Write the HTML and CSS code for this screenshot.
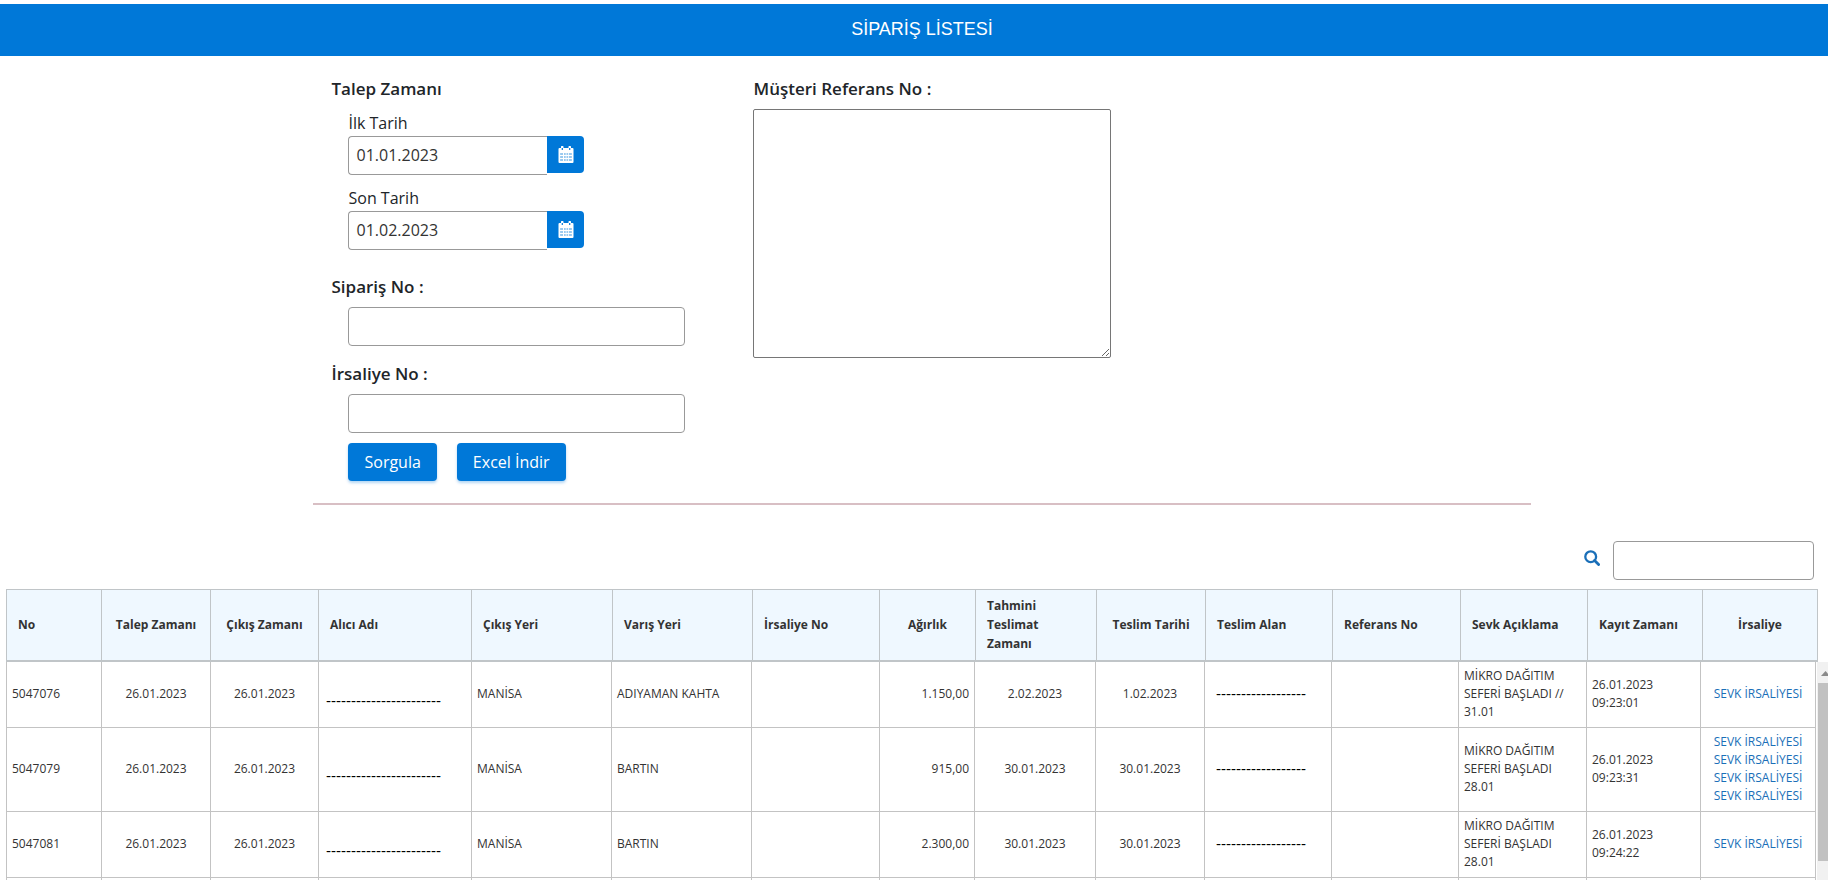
FILE: index.html
```html
<!DOCTYPE html>
<html lang="tr">
<head>
<meta charset="utf-8">
<title>Sipariş Listesi</title>
<link rel="stylesheet" href="styles.css">
</head>
<body>
<svg class="sprite" aria-hidden="true">
  <symbol id="calendar" viewBox="0 0 16 18">
    <path fill="currentColor" fill-rule="evenodd" d="M1.500 2H3V1a1 1 0 0 1 2.500 0V2h5V1A1 1 0 0 1 13 1V2h1.500A1 1 0 0 1 15.500 3V16a1 1 0 0 1-1 1h-13a1 1 0 0 1-1-1V3a1 1 0 0 1 1-1ZM2.500 7v2H5V7ZM6 7v2h1.700V7ZM8.500 7v2h1.700V7ZM11 7v2h2.500V7ZM2.500 10v2H5v-2ZM6 10v2h1.700v-2ZM8.500 10v2h1.700v-2ZM11 10v2h2.500v-2ZM2.500 13v2H5v-2ZM6 13v2h1.700v-2ZM8.500 13v2h1.700v-2ZM11 13v2h2.500v-2Z"/>
    <path fill="#fff" fill-opacity=".6" d="M2.500 7h11v8h-11z"/>
    <path fill="#0078d8" d="M3.700 2h1.200v2H3.700zM11.100 2h1.200v2h-1.200z"/>
  </symbol>
</svg>
<div class="page">
  <header class="titlebar"><h1 class="title">SİPARİŞ LİSTESİ</h1></header>

  <main>
    <form class="filters">
      <div class="filter-column">
        <fieldset class="group">
          <legend class="heading">Talep Zamanı</legend>
          <div class="date-field">
            <label class="label" for="first">İlk Tarih</label>
            <div class="date">
              <input class="input date-input" id="first" type="text" value="01.01.2023">
              <button class="date-button" type="button" aria-label="Takvim"><svg class="calendar"><use href="#calendar"/></svg></button>
            </div>
          </div>
          <div class="date-field">
            <label class="label" for="last">Son Tarih</label>
            <div class="date">
              <input class="input date-input" id="last" type="text" value="01.02.2023">
              <button class="date-button" type="button" aria-label="Takvim"><svg class="calendar"><use href="#calendar"/></svg></button>
            </div>
          </div>
        </fieldset>
        <div class="group text-field">
          <label class="heading" for="order">Sipariş No :</label>
          <input class="input indent" id="order" type="text">
        </div>
        <div class="group text-field">
          <label class="heading" for="waybill">İrsaliye No :</label>
          <input class="input indent" id="waybill" type="text">
        </div>
        <div class="actions">
          <button class="button" type="button">Sorgula</button>
          <button class="button" type="button">Excel İndir</button>
        </div>
      </div>
      <div class="reference-column">
        <label class="heading" for="reference">Müşteri Referans No :</label>
        <textarea class="reference" id="reference"></textarea>
      </div>
    </form>

    <div class="search">
      <label class="search-label" for="search" aria-label="Ara">
        <svg class="magnifier" viewBox="0 0 16 16"><circle cx="6.700" cy="6.700" r="5.400" fill="none" stroke="currentColor" stroke-width="2.300"/><path d="M10.600 10.600 14.600 14.600" stroke="currentColor" stroke-width="2.800" stroke-linecap="round"/></svg>
      </label>
      <input class="input search-input" id="search" type="text">
    </div>

    <section class="grid">
      <table class="table head">
        <colgroup><col class="w95"><col class="w109"><col class="w108"><col class="w153"><col class="w141"><col class="w140"><col class="w127"><col class="w96"><col class="w121"><col class="w109"><col class="w127"><col class="w128"><col class="w127"><col class="w115"><col class="w115"></colgroup>
        <thead>
          <tr><th scope="col">No</th><th scope="col" class="center">Talep Zamanı</th><th scope="col" class="center">Çıkış Zamanı</th><th scope="col">Alıcı Adı</th><th scope="col">Çıkış Yeri</th><th scope="col">Varış Yeri</th><th scope="col">İrsaliye No</th><th scope="col" class="center">Ağırlık</th><th scope="col">Tahmini<br>Teslimat<br>Zamanı</th><th scope="col" class="center">Teslim Tarihi</th><th scope="col">Teslim Alan</th><th scope="col">Referans No</th><th scope="col">Sevk Açıklama</th><th scope="col">Kayıt Zamanı</th><th scope="col" class="center">İrsaliye</th></tr>
        </thead>
      </table>
      <div class="scroller">
        <table class="table body">
          <colgroup><col class="w95"><col class="w109"><col class="w108"><col class="w153"><col class="w140"><col class="w140"><col class="w128"><col class="w95"><col class="w121"><col class="w109"><col class="w127"><col class="w127"><col class="w128"><col class="w114"><col class="w115"></colgroup>
          <tbody>
            <tr><td>5047076</td><td class="center">26.01.2023</td><td class="center">26.01.2023</td><td class="masked low">-----------------------</td><td>MANİSA</td><td>ADIYAMAN KAHTA</td><td></td><td class="right">1.150,00</td><td class="center">2.02.2023</td><td class="center">1.02.2023</td><td class="masked receiver">------------------</td><td></td><td>MİKRO DAĞITIM<br>SEFERİ BAŞLADI //<br>31.01</td><td>26.01.2023<br>09:23:01</td><td class="center"><a class="link" href="#">SEVK İRSALİYESİ</a></td></tr>
            <tr><td>5047079</td><td class="center">26.01.2023</td><td class="center">26.01.2023</td><td class="masked low">-----------------------</td><td>MANİSA</td><td>BARTIN</td><td></td><td class="right">915,00</td><td class="center">30.01.2023</td><td class="center">30.01.2023</td><td class="masked receiver">------------------</td><td></td><td>MİKRO DAĞITIM<br>SEFERİ BAŞLADI<br>28.01</td><td>26.01.2023<br>09:23:31</td><td class="center"><a class="link" href="#">SEVK İRSALİYESİ</a><a class="link" href="#">SEVK İRSALİYESİ</a><a class="link" href="#">SEVK İRSALİYESİ</a><a class="link" href="#">SEVK İRSALİYESİ</a></td></tr>
            <tr><td>5047081</td><td class="center">26.01.2023</td><td class="center">26.01.2023</td><td class="masked low">-----------------------</td><td>MANİSA</td><td>BARTIN</td><td></td><td class="right">2.300,00</td><td class="center">30.01.2023</td><td class="center">30.01.2023</td><td class="masked receiver">------------------</td><td></td><td>MİKRO DAĞITIM<br>SEFERİ BAŞLADI<br>28.01</td><td>26.01.2023<br>09:24:22</td><td class="center"><a class="link" href="#">SEVK İRSALİYESİ</a></td></tr>
            <tr class="next"><td></td><td></td><td></td><td></td><td></td><td></td><td></td><td></td><td></td><td></td><td></td><td></td><td></td><td></td><td></td></tr>
          </tbody>
        </table>
        <div class="scrollbar" aria-hidden="true">
          <svg class="arrow" viewBox="0 0 17 21"><path d="M4 14 8.500 9 13 14Z" fill="#8a8a8a"/></svg>
          <div class="thumb"></div>
        </div>
      </div>
    </section>
  </main>
</div>
</body>
</html>
```
FILE: styles.css
```css
* { box-sizing: border-box; }

html { height: 100%; overflow: hidden; }

body {
  height: 100%;
  margin: 0;
  overflow: hidden;
  background: #fff;
  color: #212529;
  font: 400 16px/24px "Open Sans", "Noto Sans", sans-serif;
}

.sprite { display: none; }

/* The page runs under the window's right edge by one scrollbar. */
.page { width: calc(100% + 16px); padding-top: 4px; }

.titlebar {
  padding: 13px 0 15px;
  background: #0078d8;
  color: #fff;
  text-align: center;
}

.title { margin: 0; font: 400 18px/24px "Liberation Sans", Arial, sans-serif; }

.filters {
  display: flex;
  gap: 68px;
  width: 66%;
  margin: 0 auto;
  padding: 21px 18px 22px;
  border-bottom: 2px solid #d8bfc4;
}

.filter-column { width: 354px; }
.reference-column { width: 358px; }

.heading {
  display: block;
  padding: 0;
  font-size: 17px;
  font-weight: 600;
  line-height: 24px;
}

.group { margin: 0; padding: 0; border: 0; }

.label { display: block; padding-bottom: 2px; line-height: 22px; }

.date-field { margin: 12px 0 0 17px; }
.date-field:first-of-type { margin-top: 11px; }

.date { display: flex; align-items: flex-start; }

.input {
  display: block;
  height: 39px;
  margin: 0;
  padding: 0 7px 2px;
  border: 1px solid #999;
  border-radius: 4px;
  outline: 0;
  background: #fff;
  color: #333;
  font: inherit;
}

.date-input {
  width: 199px;
  border-right: 0;
  border-radius: 4px 0 0 4px;
}

.date-button {
  display: flex;
  align-items: center;
  justify-content: center;
  width: 37px;
  height: 37px;
  padding: 0;
  border: 0;
  border-radius: 0 4px 4px 0;
  background: #0078d8;
  color: #fff;
}

.calendar { width: 16px; height: 18px; }

.text-field { margin-top: 16px; }
.group + .text-field:nth-child(2) { margin-top: 25px; }
.indent { width: 337px; margin: 8px 0 0 17px; }

.actions { display: flex; gap: 20px; margin: 10px 0 0 17px; }

.button {
  height: 38px;
  padding: 0 16px;
  border: 0;
  border-radius: 4px;
  background: #0078d8;
  box-shadow: 0 2px 3px #0078d84d;
  color: #fff;
  font: 400 16px/24px "Open Sans", "Noto Sans", sans-serif;
}

.reference {
  display: block;
  width: 100%;
  height: 249px;
  margin-top: 8px;
  border: 1px solid #767676;
  border-radius: 2px;
  outline: 0;
  resize: both;
}

.search {
  display: flex;
  justify-content: flex-end;
  gap: 13px;
  padding: 36px 30px 9px;
}

.search-label { padding-top: 9px; line-height: 0; color: #1a6fb8; }
.magnifier { width: 16px; height: 16px; }
.search-input { width: 201px; }

.grid { padding-left: 6px; font-size: 12px; line-height: 18px; }

.table {
  border-collapse: collapse;
  table-layout: fixed;
}

.head { width: calc(100% - 26px); }

.head th {
  height: 71px;
  padding: 0 11px;
  border: 1px solid #c0c5c8;
  border-bottom-width: 2px;
  background: #eff8ff;
  color: #333;
  font-weight: 700;
  line-height: 19px;
  text-align: left;
}

.scroller { display: flex; width: calc(100% - 10px); }

.body { flex: 1; width: calc(100% - 19px); margin-right: 1px; }

.body td {
  padding: 5px 5px 6px;
  border: 1px solid #c3c3c3;
  border-top: 0;
  color: #333;
  white-space: nowrap;
}

.body .next td { height: 66px; }

.head .center { padding: 0 5px; text-align: center; }
.body .center { text-align: center; }
.body .right { text-align: right; }

.body .masked {
  color: #000;
  font: 400 15px/18px "Liberation Sans", Arial, sans-serif;
}

.body .low { padding: 18px 0 5px 7px; }
.body .receiver { padding-left: 11px; }

.link { display: block; color: #1a6fb8; text-decoration: none; }

.scrollbar { width: 17px; background: #f1f1f1; }
.arrow { display: block; width: 17px; height: 21px; }
.thumb { height: 178px; margin: 0 1px; background: #c1c1c1; }

.w95 { width: 95px; }
.w96 { width: 96px; }
.w108 { width: 108px; }
.w109 { width: 109px; }
.w114 { width: 114px; }
.w115 { width: 115px; }
.w121 { width: 121px; }
.w127 { width: 127px; }
.w128 { width: 128px; }
.w140 { width: 140px; }
.w141 { width: 141px; }
.w153 { width: 153px; }
```
